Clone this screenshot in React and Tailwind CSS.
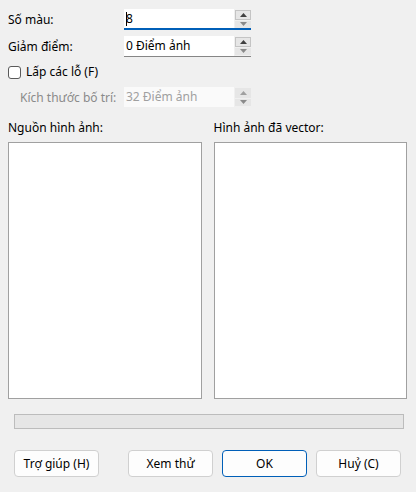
import { useState } from 'react';

function Spin({ disabled }) {
  const c = disabled ? 'text-[#a0a0a0]' : 'text-[#404040]';
  return (
    <div className="flex flex-col w-[16px] h-[18px] gap-[1px] mt-[1px] ml-[1px]">
      <div className={`flex-1 flex items-center justify-center bg-[#e6e6e6] border ${disabled ? 'border-[#e6e6e6]' : 'border-[#c4c4c4]'} ${c}`}>
        <svg width="7" height="4" viewBox="0 0 7 4"><path d="M0 4 L3.5 0 L7 4 Z" fill="currentColor" /></svg>
      </div>
      <div className="flex-1 flex items-center justify-center bg-[#e6e6e6] text-[#8a8a8a]">
        <svg width="7" height="4" viewBox="0 0 7 4"><path d="M0 0 L3.5 4 L7 0 Z" fill="currentColor" /></svg>
      </div>
    </div>
  );
}

function SpinField({ value, focused, disabled }) {
  return (
    <div className={`flex w-[127px] h-[21px] border-b ${focused ? 'border-[#005fb8] border-b-2' : disabled ? 'border-transparent' : 'border-[#868686]'}`}>
      <div className={`w-[110px] flex items-center pl-[2px] ${disabled ? 'bg-[#fafafa] text-[#a0a0a0]' : 'bg-white text-black'}`}>
        {focused && <span className="w-[1px] h-[14px] bg-black -mr-[1px]" />}
        {value}
      </div>
      <Spin disabled={disabled} />
    </div>
  );
}

function Btn({ children, primary }) {
  return (
    <button className={`w-[85px] h-[27px] rounded-[4px] bg-[#fdfdfd] text-black ${primary ? 'border border-[#005fb8]' : 'border border-[#d0d0d0]'}`}>
      {children}
    </button>
  );
}

export default function App() {
  const [fill, setFill] = useState(false);
  return (
    <div className="w-[416px] h-[492px] bg-[#f0f0f0] text-[12px] leading-none text-black" style={{ fontFamily: '"Segoe UI", "Noto Sans", sans-serif' }}>
      <div className="pt-[9px] px-[8px] flex flex-col">
        <div className="flex items-center h-[21px]">
          <span className="w-[116px]">Số màu:</span>
          <SpinField value="8" focused />
        </div>
        <div className="flex items-center h-[21px] mt-[6px]">
          <span className="w-[116px]">Giảm điểm:</span>
          <SpinField value="0 Điểm ảnh" />
        </div>
        <label className="flex items-center h-[16px] mt-[7px] gap-[5px]">
          <input type="checkbox" checked={fill} onChange={(e) => setFill(e.target.checked)} className="appearance-none w-[13px] h-[13px] rounded-[3px] border border-[#5a5a5a] bg-white" />
          <span>Lấp các lỗ (F)</span>
        </label>
        <div className="flex items-center h-[21px] mt-[7px]">
          <span className="w-[116px] pl-[12px] text-[#8a8a8a]">Kích thước bố trí:</span>
          <SpinField value="32 Điểm ảnh" disabled />
        </div>
        <div className="grid grid-cols-2 gap-[12px] mt-[14px] pr-[1px]">
          <div className="flex flex-col">
            <span className="h-[20px]">Nguồn hình ảnh:</span>
            <div className="h-[257px] bg-white border border-[#a0a0a0] w-[194px]" />
          </div>
          <div className="flex flex-col">
            <span className="h-[20px]">Hình ảnh đã vector:</span>
            <div className="h-[257px] bg-white border border-[#a0a0a0] w-[193px]" />
          </div>
        </div>
        <div className="mt-[15px] ml-[6px] mr-[4px] h-[15px] bg-[#e6e6e6] border border-[#bcbcbc]" />
        <div className="flex mt-[21px] mx-[6px]">
          <Btn>Trợ giúp (H)</Btn>
          <div className="flex gap-[9px] ml-[29px]">
            <Btn>Xem thử</Btn>
            <Btn primary>OK</Btn>
            <Btn>Huỷ (C)</Btn>
          </div>
        </div>
      </div>
    </div>
  );
}
